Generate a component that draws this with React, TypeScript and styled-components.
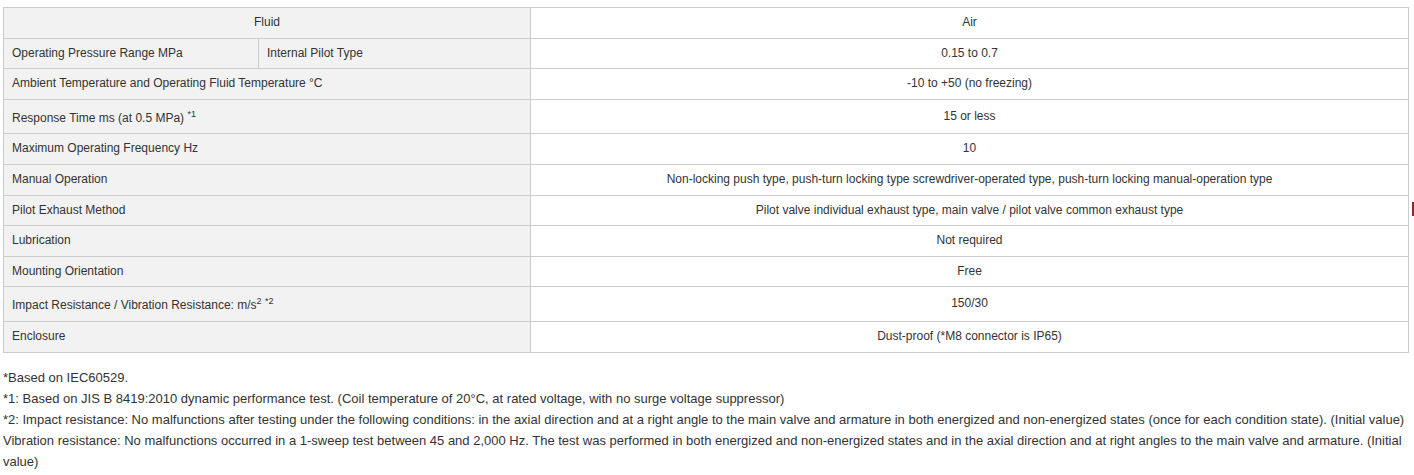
import React from "react";
import styled, { createGlobalStyle } from "styled-components";

const GlobalStyle = createGlobalStyle`
  html, body {
    margin: 0;
    padding: 0;
    background: #ffffff;
    font-family: "Liberation Sans", Arial, sans-serif;
    color: #333333;
  }
`;

type Row = {
  label: React.ReactNode;
  sub?: string;
  value: string;
};

const rows: Row[] = [
  { label: "Operating Pressure Range MPa", sub: "Internal Pilot Type", value: "0.15 to 0.7" },
  { label: "Ambient Temperature and Operating Fluid Temperature °C", value: "-10 to +50 (no freezing)" },
  {
    label: (
      <>
        Response Time ms (at 0.5 MPa) <sup>*1</sup>
      </>
    ),
    value: "15 or less",
  },
  { label: "Maximum Operating Frequency Hz", value: "10" },
  {
    label: "Manual Operation",
    value:
      "Non-locking push type, push-turn locking type screwdriver-operated type, push-turn locking manual-operation type",
  },
  {
    label: "Pilot Exhaust Method",
    value: "Pilot valve individual exhaust type, main valve / pilot valve common exhaust type",
  },
  { label: "Lubrication", value: "Not required" },
  { label: "Mounting Orientation", value: "Free" },
  {
    label: (
      <>
        Impact Resistance / Vibration Resistance: m/s<sup>2</sup> <sup>*2</sup>
      </>
    ),
    value: "150/30",
  },
  { label: "Enclosure", value: "Dust-proof (*M8 connector is IP65)" },
];

const App = () => {
  return (
    <>
      <GlobalStyle />
      <Page>
        <SpecTable>
          <colgroup>
            <col style={{ width: "255px" }} />
            <col style={{ width: "272px" }} />
            <col />
          </colgroup>
          <tbody>
            <tr>
              <HeadCell colSpan={2} align="center">
                Fluid
              </HeadCell>
              <ValueCell>Air</ValueCell>
            </tr>
            {rows.map((row, i) => (
              <tr key={i}>
                {row.sub ? (
                  <>
                    <HeadCell>{row.label}</HeadCell>
                    <HeadCell>{row.sub}</HeadCell>
                  </>
                ) : (
                  <HeadCell colSpan={2}>{row.label}</HeadCell>
                )}
                <ValueCell>{row.value}</ValueCell>
              </tr>
            ))}
          </tbody>
        </SpecTable>
        <Notes>
          *Based on IEC60529.
          <br />
          *1: Based on JIS B 8419:2010 dynamic performance test. (Coil temperature of 20°C, at rated voltage, with no
          surge voltage suppressor)
          <br />
          *2: Impact resistance: No malfunctions after testing under the following conditions: in the axial direction
          and at a right angle to the main valve and armature in both energized and non-energized states (once for each
          condition state). (Initial value)
          <br />
          Vibration resistance: No malfunctions occurred in a 1-sweep test between 45 and 2,000 Hz. The test was
          performed in both energized and non-energized states and in the axial direction and at right angles to the
          main valve and armature. (Initial value)
        </Notes>
      </Page>
      <SideTab />
    </>
  );
};

export default App;

const Page = styled.div`
  padding: 7px 5px 0 3px;
  width: 1406px;
`;

const SpecTable = styled.table`
  width: 100%;
  border-collapse: collapse;
  table-layout: fixed;
  font-size: 12px;
  color: #333333;
  sup {
    font-size: 9px;
    vertical-align: super;
  }
`;

const HeadCell = styled.td<{ align?: string }>`
  background-color: #f2f2f2;
  border: 1px solid #cccccc;
  padding: 8px;
  text-align: ${(props) => props.align || "left"};
  line-height: 13.6px;
`;

const ValueCell = styled.td`
  background-color: #ffffff;
  border: 1px solid #cccccc;
  padding: 8px;
  text-align: center;
  line-height: 13.6px;
`;

const Notes = styled.div`
  margin-top: 14px;
  font-size: 13px;
  line-height: 21px;
  color: #333333;
`;

const SideTab = styled.div`
  position: fixed;
  right: 0;
  top: 202px;
  width: 2px;
  height: 14px;
  background-color: #8b2a2a;
`;
